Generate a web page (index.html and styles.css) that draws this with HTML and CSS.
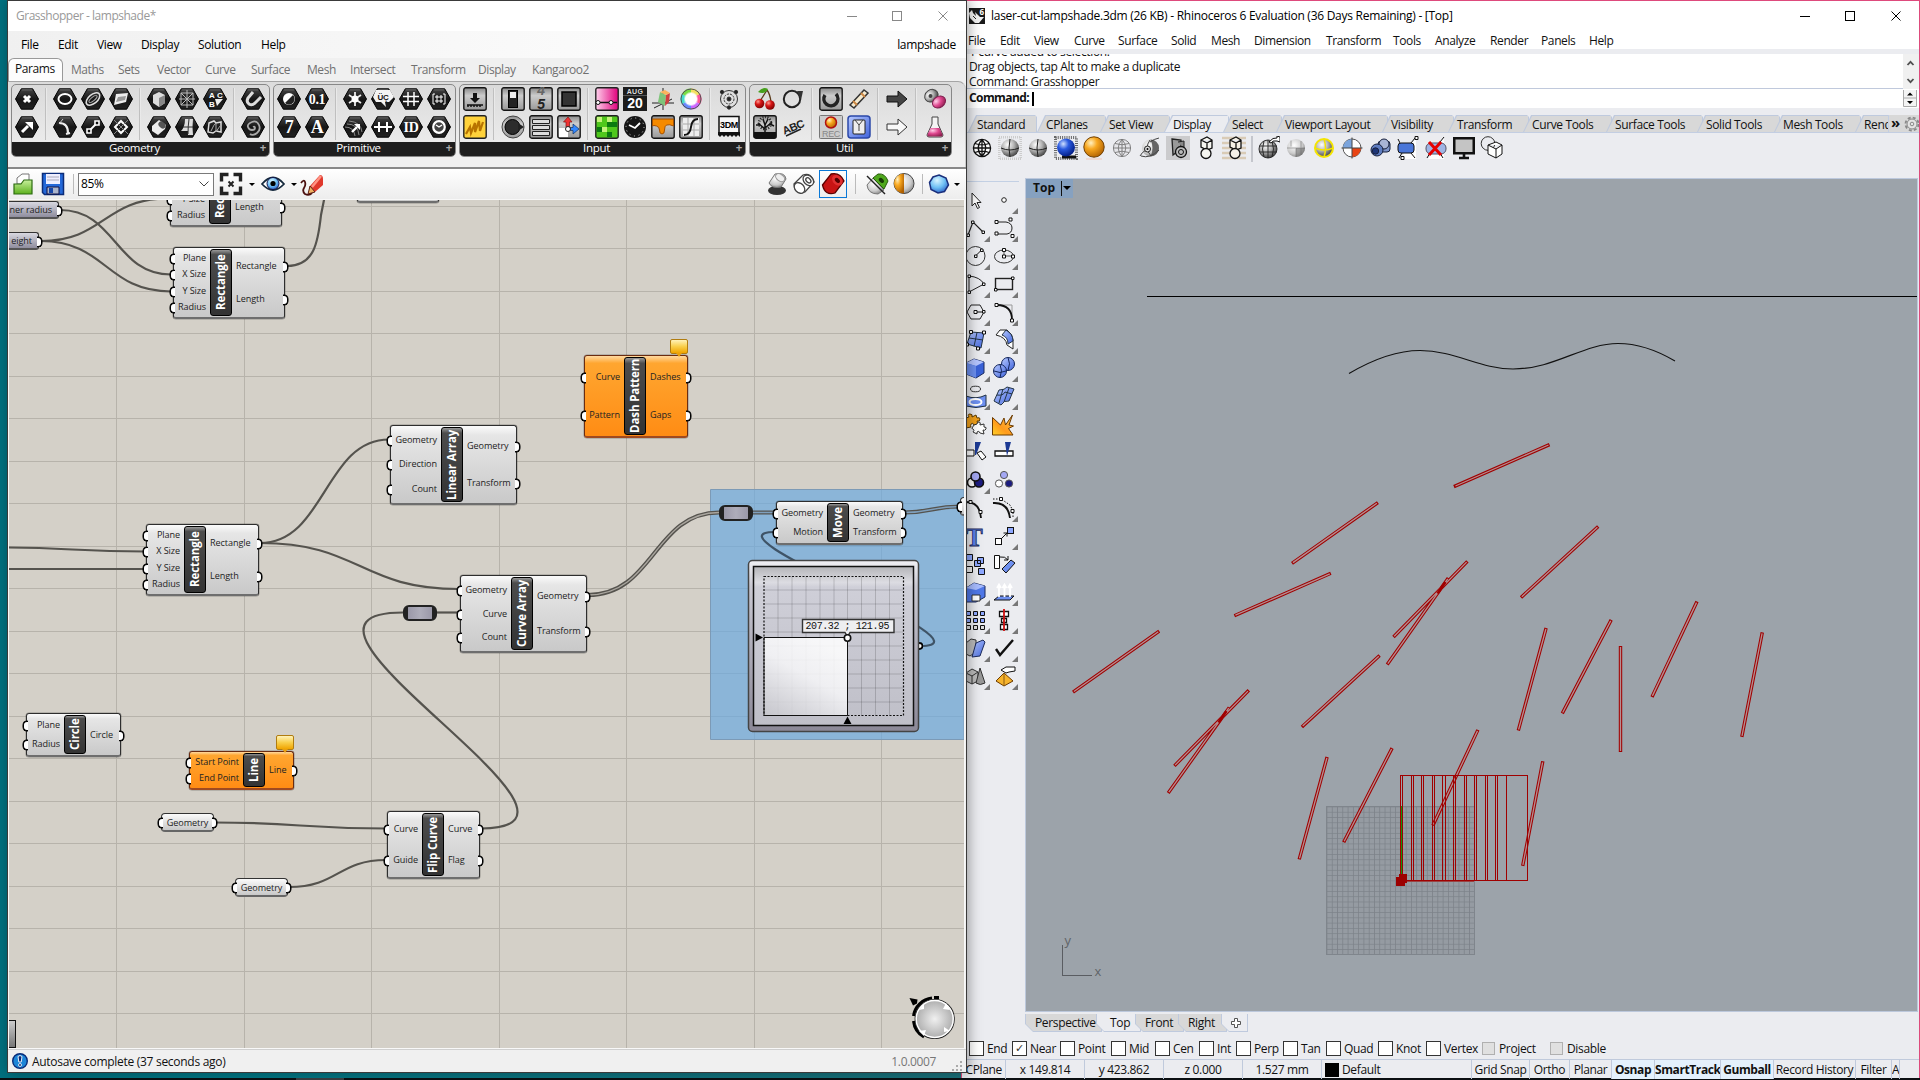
FILE: index.html
```html
<!DOCTYPE html>
<html lang="en">
<head>
<meta charset="utf-8">
<title>Grasshopper - lampshade</title>
<link rel="stylesheet" href="styles.css">
</head>
<body>
<svg class="defs" width="0" height="0">
  <defs>
    <linearGradient id="gHex" x1="0" y1="0" x2="0" y2="1"><stop offset="0" stop-color="#444"/><stop offset=".5" stop-color="#161616"/><stop offset="1" stop-color="#222"/></linearGradient>
    <linearGradient id="gSilver" x1="0" y1="0" x2="0" y2="1"><stop offset="0" stop-color="#8a8a8a"/><stop offset=".35" stop-color="#ccc"/><stop offset="1" stop-color="#999"/></linearGradient>
    <linearGradient id="gPink"><stop offset="0" stop-color="#ffd0ec"/><stop offset="1" stop-color="#e0007c"/></linearGradient>
    <linearGradient id="gBlueL" x1="0" y1="0" x2="1" y2="1"><stop offset="0" stop-color="#b9cbff"/><stop offset="1" stop-color="#3f63dc"/></linearGradient>
    <linearGradient id="gGreen" x1="0" y1="0" x2="0" y2="1"><stop offset="0" stop-color="#c8f09c"/><stop offset="1" stop-color="#5cb01c"/></linearGradient>
    <linearGradient id="gFire" x1="1" y1="0" x2="0" y2="1"><stop offset="0" stop-color="#ffc24a"/><stop offset=".6" stop-color="#ff9a1c"/><stop offset="1" stop-color="#ffd028"/></linearGradient>
    <radialGradient id="rGray" cx=".38" cy=".32" r=".75"><stop offset="0" stop-color="#fff"/><stop offset=".45" stop-color="#b5b5b5"/><stop offset="1" stop-color="#333"/></radialGradient>
    <radialGradient id="rLight" cx=".4" cy=".35" r=".75"><stop offset="0" stop-color="#fff"/><stop offset=".6" stop-color="#ccc"/><stop offset="1" stop-color="#777"/></radialGradient>
    <radialGradient id="rBlue" cx=".35" cy=".3" r=".75"><stop offset="0" stop-color="#cfe0ff"/><stop offset=".4" stop-color="#2a5ae0"/><stop offset="1" stop-color="#001a80"/></radialGradient>
    <radialGradient id="rOrange" cx=".35" cy=".3" r=".75"><stop offset="0" stop-color="#fff0c0"/><stop offset=".4" stop-color="#f8a820"/><stop offset="1" stop-color="#b06000"/></radialGradient>
    <radialGradient id="rRed" cx=".35" cy=".3" r=".75"><stop offset="0" stop-color="#ff9a90"/><stop offset=".4" stop-color="#d81818"/><stop offset="1" stop-color="#700"/></radialGradient>
    <radialGradient id="rPink" cx=".35" cy=".3" r=".75"><stop offset="0" stop-color="#ffd0e8"/><stop offset=".5" stop-color="#e04890"/><stop offset="1" stop-color="#902050"/></radialGradient>
    <radialGradient id="rSky" cx=".4" cy=".3" r=".8"><stop offset="0" stop-color="#d8f4ff"/><stop offset=".5" stop-color="#6fc0f4"/><stop offset="1" stop-color="#2050c0"/></radialGradient>
    <symbol id="hex" viewBox="0 0 24 24"><path d="M6.3 1.8h11.4l5.8 10.2-5.8 10.2H6.3L.5 12z" fill="url(#gHex)" stroke="#000"/><path d="M6.9 2.9h10.2" stroke="#666" fill="none"/></symbol>
    <symbol id="box" viewBox="0 0 24 24"><rect x=".8" y=".8" width="22.4" height="22.4" rx="2" fill="url(#gSilver)" stroke="#151515" stroke-width="1.4"/></symbol>
    <symbol id="globe" viewBox="0 0 24 24"><circle cx="12" cy="12" r="8.6"/><path d="M3.4 12h17.2M12 3.4v17.2M5 7.5q7 2.6 14 0M5 16.5q7-2.6 14 0M12 3.4q-7.5 8.6 0 17.2M12 3.4q7.5 8.6 0 17.2" fill="none"/></symbol>
    <symbol id="tri" viewBox="0 0 6 6"><path d="M6 0v6H0z" fill="#777"/></symbol>
  </defs>
</svg>

<div class="taskbar"><i></i></div>

<!-- ===================== Rhinoceros ===================== -->
<section class="rhino">
  <header class="r-title">
    <svg class="r-logo" width="16" height="16" viewBox="0 0 16 16"><rect width="16" height="16" fill="#1a1a1a"/><path d="M0 5l3-3 1 3 3 3-1-4 3 3 2 2h4l-5 6H6L1 10z" fill="#f2f2f2"/><path d="M4 8l3 3" stroke="#222"/><text x="10.4" y="6.6" font-size="8" font-weight="700" fill="#fff">6</text></svg>
    <span class="r-name">laser-cut-lampshade.3dm (26 KB) - Rhinoceros 6 Evaluation (36 Days Remaining) - [Top]</span>
    <svg class="r-ctl" width="102" height="12" viewBox="0 0 102 12" fill="none" stroke="#000"><path d="M0 6.5h10M91.500 1.500l9 9M100.500 1.500l-9 9"/><rect x="45.500" y="1.500" width="9" height="9"/></svg>
  </header>
  <nav class="r-menu"><span>File</span><span>Edit</span><span>View</span><span>Curve</span><span>Surface</span><span>Solid</span><span>Mesh</span><span>Dimension</span><span>Transform</span><span>Tools</span><span>Analyze</span><span>Render</span><span>Panels</span><span>Help</span></nav>
  <div class="r-history">
    <div class="r-lines"><p>1 curve added to selection.</p><p>Drag objects, tap Alt to make a duplicate</p><p>Command: Grasshopper</p></div>
    <svg class="r-scroll" width="16" height="35" viewBox="0 0 16 35" fill="none" stroke="#505050" stroke-width="1.800"><path d="M4.500 11l3-3.200 3 3.200M4.500 25l3 3.200 3-3.200"/></svg>
  </div>
  <div class="r-command"><b>Command:</b><i class="caret"></i>
    <svg class="r-spin" width="14" height="17" viewBox="0 0 14 17"><path d="M.500 0v16.500h13V0M0 8h14" fill="#f4f4f4" stroke="#aaa"/><path d="M4 5.500h6l-3-3zM4 11h6l-3 3z"/></svg>
  </div>
  <div class="r-tabs">
    <span>Standard</span><span>CPlanes</span><span>Set View</span><span class="on">Display</span><span>Select</span><span>Viewport Layout</span><span>Visibility</span><span>Transform</span><span>Curve Tools</span><span>Surface Tools</span><span>Solid Tools</span><span>Mesh Tools</span><span class="cut">Rend</span>
    <div class="r-more"><b>»</b><svg width="16" height="16" viewBox="0 0 16 16" fill="none" stroke="#888"><circle cx="8" cy="8" r="6.500" stroke-width="1.800" stroke-dasharray="3 2.100"/><circle cx="8" cy="8" r="5" fill="#e4e4e4"/><circle cx="8" cy="8" r="1.800"/></svg></div>
  </div>
  <div class="r-icons">
    <svg viewBox="0 0 24 24"><use href="#globe" fill="#fff" stroke="#111" stroke-width="1.300"/></svg>
    <svg viewBox="0 0 24 24"><rect x="1" y="1" width="22" height="22" fill="none" stroke="#ccc" stroke-width="3" stroke-dasharray="1 1"/><circle cx="12" cy="12" r="9" fill="url(#rGray)"/><path d="M3 12q9 4 18 0M12 3q-2 9 0 18" fill="none" stroke="#222"/></svg>
    <svg viewBox="0 0 24 24"><circle cx="12" cy="12" r="9" fill="url(#rGray)"/><path d="M3 12q9 4 18 0M12 3q-2 9 0 18" fill="none" stroke="#222"/></svg>
    <svg viewBox="0 0 24 24"><rect x="1.500" y="1.500" width="21" height="21" fill="none" stroke="#666" stroke-width="3" stroke-dasharray="1 1.200"/><path d="M8 21h14" stroke="#111" stroke-width="3"/><circle cx="12" cy="11.500" r="9" fill="url(#rBlue)"/></svg>
    <svg viewBox="0 0 24 24"><circle cx="12" cy="11" r="10.200" fill="url(#rOrange)" stroke="#713f00"/><path d="M4 23h16" stroke="#f2c9b8"/></svg>
    <svg viewBox="0 0 24 24"><use href="#globe" fill="#e6e6ea" stroke="#777" stroke-width=".9"/></svg>
    <svg viewBox="0 0 24 24"><circle cx="12.500" cy="12" r="8.500" fill="url(#rLight)"/><path d="M12.500 3.500a8.500 8.500 0 0 1 0 17q4-8 0-17z" fill="#666"/><path d="M2 20q2-4 6-6M12 6q4-3 9-4M12 4q-6 8 1 16M3 20q9 3 18-6" fill="none" stroke="#444"/><circle cx="9.500" cy="13" r="3" fill="#ddd" stroke="#222"/><circle cx="9.500" cy="13" r="1"/></svg>
    <svg viewBox="0 0 24 24"><path fill="#cbcbcd" d="M0 0h24v24H0z"/><path d="M6 3l9 1v9l-8 6z" fill="#999" stroke="#222" stroke-width="1.300"/><path d="M12 6l6-1v8" fill="#888" stroke="#222"/><circle cx="15" cy="16" r="5.500" fill="#bbb" stroke="#111" stroke-width="1.300"/><circle cx="15" cy="16" r="2.500" fill="none" stroke="#111"/></svg>
    <svg viewBox="0 0 24 24" fill="#f5f5f0" stroke="#111" stroke-width="1.300"><path d="M7 4l6-3 5 3v8l-5 2-6-3zM7 4l6 3 5-3M13 7v7"/><circle cx="12" cy="17.500" r="5"/></svg>
    <svg viewBox="0 0 24 24"><path d="M0 2h24M0 7h24M0 12h24M0 17h24M0 22h24" stroke="#d9cbb6" stroke-width="2.400"/><g fill="#f5f0e6" stroke="#111" stroke-width="1.300"><path d="M8 4l6-3 5 3v8l-5 2-6-3zM8 4l6 3 5-3M14 7v7"/><circle cx="13" cy="17.500" r="5"/></g></svg>
    <i class="r-sep"></i>
    <svg viewBox="0 0 24 24"><g stroke="#222" stroke-width=".9"><circle cx="12" cy="13" r="9" fill="url(#rGray)"/><path d="M3.500 10h17M3.500 16h17M12 4v18M8 5q-3 8 0 16M16 5q3 8 0 16" fill="none"/></g><path d="M13 6q4-5 8-4V0l3 1v5l-3-1q-4-1-6 2z" fill="#fff" stroke="#111"/></svg>
    <svg viewBox="0 0 24 24"><circle cx="12" cy="12" r="9" fill="url(#rLight)"/><path d="M12 12h9a9 9 0 0 1-9 9z" fill="#777" opacity=".6"/><path d="M12 12v9M3 12h18M7 4.500v6M17 5v14" stroke="#666" opacity=".5"/></svg>
    <svg viewBox="0 0 24 24"><circle cx="12" cy="12" r="9" fill="url(#rGray)" stroke="#f4e400" stroke-width="2"/><path d="M3 12q9 4 18 0M12 3q3 9 0 18" fill="none" stroke="#f4e400" stroke-width="1.500"/></svg>
    <svg viewBox="0 0 24 24"><circle cx="12" cy="12" r="9" fill="#fff" stroke="#555"/><path d="M12 12V3a9 9 0 0 0-9 9z" fill="#7ba4dc"/><path d="M12 12v9a9 9 0 0 0 9-9z" fill="#e84414"/><path d="M1.500 12h21M12 1.500v21" stroke="#444"/></svg>
    <svg viewBox="0 0 24 24" stroke="#17203c"><rect x="10" y="5" width="12" height="11" rx="3" fill="#7d93c8"/><circle cx="16" cy="8" r="5" fill="#a9b5d6"/><circle cx="9" cy="14" r="6" fill="#5e7cc0"/><circle cx="7.500" cy="15" r="3.200" fill="#1d3576"/></svg>
    <svg viewBox="0 0 24 24"><path d="M4 23L20 2v21z" fill="#fff"/><rect x="2" y="7" width="16" height="10" rx="3" fill="#4a76d8" stroke="#111"/><path d="M15 7l4-5M15 17l4 5M6 17l-3 5M4 7L2 3" stroke="#111"/><path d="M19 .500h3v3h-3zM5 20.500h3v3H5z" fill="#fff" stroke="#111"/></svg>
    <svg viewBox="0 0 24 24"><path d="M4 23L20 2v21z" fill="#fff"/><rect x="2" y="7" width="20" height="11" rx="5" fill="#9fb4e4" stroke="#556"/><path d="M16 6l4-5M16 17l3 5M6 17l-3 5" stroke="#111"/><path d="M5 6l12 13M17 6L5 19" stroke="#e60000" stroke-width="3"/></svg>
    <svg viewBox="0 0 24 24"><rect x="1" y="1" width="22" height="17.500" fill="#111"/><rect x="3.500" y="3.500" width="17" height="12.500" fill="#c4c4c4"/><path d="M7 22h10M12 18v4" stroke="#111" stroke-width="2.600"/></svg>
    <svg viewBox="0 0 24 24" fill="none" stroke="#333"><circle cx="8" cy="7.500" r="6.800"/><path d="M8 9l8-3 6 3v9l-6 4-8-4zM8 9l8 4 6-4M16 13v9" fill="#fff" stroke="#111"/></svg>
  </div>
  <div class="r-body">
    <div class="r-palette">
      <svg viewBox="0 0 28 28"><path d="M10 7v13l3-3 2.500 5.500 2-1-2.500-5h4z" fill="#fff" stroke="#222"/></svg>
      <svg viewBox="0 0 28 28"><circle cx="14" cy="14" r="2.300" fill="#fff" stroke="#222"/><use href="#tri" x="22" y="22" width="6" height="6"/></svg>
      <svg viewBox="0 0 28 28"><path d="M6 21l5-13 10 10" fill="none" stroke="#222" stroke-width="1.200"/><path d="M5 20h2.500v2.500H5zM9.500 7H12v2.500H9.500zM20 17h2.500v2.500H20z" fill="#fff" stroke="#111"/><use href="#tri" x="22" y="22" width="6" height="6"/></svg>
      <svg viewBox="0 0 28 28"><path d="M6 8h10q6 1 6 6t-5 6H6" fill="none" stroke="#222"/><path d="M5 6.500h3v3H5zM19 4h3v3h-3zM5 18h3v3H5zM21 20.500h3v3h-3z" fill="#fff" stroke="#111"/><use href="#tri" x="22" y="22" width="6" height="6"/></svg>
      <svg viewBox="0 0 28 28"><circle cx="13.500" cy="14" r="9.500" fill="none" stroke="#333"/><path d="M13.500 14l6-6" stroke="#111"/><path d="M12.500 13H15v2.500h-2.500zM18.500 7H21v2.500h-2.500z" fill="#fff" stroke="#111"/><use href="#tri" x="22" y="22" width="6" height="6"/></svg>
      <svg viewBox="0 0 28 28"><ellipse cx="14" cy="14.500" rx="9.500" ry="6.500" fill="none" stroke="#333"/><path d="M14 14V8M14 14h9" stroke="#555"/><path d="M12.500 13h3v3h-3zM12.500 6.500h3v3h-3zM21.500 13h3v3h-3z" fill="#fff" stroke="#111"/><use href="#tri" x="22" y="22" width="6" height="6"/></svg>
      <svg viewBox="0 0 28 28"><path d="M7 6v16l15-8M7 6q11 1 15 8" fill="none" stroke="#222"/><path d="M6 5h2.500v2.500H6zM6 21h2.500v2.500H6zM20.500 13H23v2.500h-2.500z" fill="#fff" stroke="#111"/><use href="#tri" x="22" y="22" width="6" height="6"/></svg>
      <svg viewBox="0 0 28 28"><rect x="5.500" y="8.500" width="17" height="11" fill="none" stroke="#222" stroke-width="1.400"/><path d="M4.500 18.500H7V21H4.500zM21.500 7H24v2.500h-2.500z" fill="#fff" stroke="#111"/><use href="#tri" x="22" y="22" width="6" height="6"/></svg>
      <svg viewBox="0 0 28 28"><path d="M9 7h9l4 7-4 7H9l-4-7z" fill="none" stroke="#222"/><path d="M13 14h8" stroke="#111"/><path d="M12 12.500h3v3h-3zM20.500 12.500h2.500v2.500h-2.500z" fill="#fff" stroke="#111"/><use href="#tri" x="22" y="22" width="6" height="6"/></svg>
      <svg viewBox="0 0 28 28"><path d="M7 7h15v14" fill="none" stroke="#999"/><path d="M7 7q15 0 15 15" fill="none" stroke="#111" stroke-width="1.800"/><path d="M5 5.500h3v3H5zM20.500 21h3v3h-3z" fill="#fff" stroke="#111"/><use href="#tri" x="22" y="22" width="6" height="6"/></svg>
      <svg viewBox="0 0 28 28"><path d="M9 6l13 1-3 15-14-4z" fill="url(#gBlueL)" stroke="#234"/><path d="M15 6.500l-3 14M7 12l14 2" stroke="#234"/><path d="M7.500 4.500h3v3h-3zM20.500 5h3v3h-3zM3.500 17h3v3h-3zM14.500 21h3v3h-3z" fill="#fff" stroke="#111"/><use href="#tri" x="22" y="22" width="6" height="6"/></svg>
      <svg viewBox="0 0 28 28"><path d="M6 9l4-5h7q6 4 6 10v9l-6-4q-1-8-11-10z" fill="#fff" stroke="#222"/><path d="M12 9l4-5q7 4 7 11l-5 3q0-7-6-9z" fill="url(#gBlueL)" stroke="#234"/><use href="#tri" x="22" y="22" width="6" height="6"/></svg>
      <svg viewBox="0 0 28 28"><path d="M4 9l8-4 10 3v11l-8 5-10-4z" fill="#3a62d8" stroke="#1c2b5c"/><path d="M4 9l8-4 10 3-8 4z" fill="#b5c6ff"/><path d="M4 9l10 3v12L4 20z" fill="#6d90f0"/><use href="#tri" x="22" y="22" width="6" height="6"/></svg>
      <svg viewBox="0 0 28 28" stroke="#14265c"><circle cx="18" cy="10" r="6.500" fill="url(#gBlueL)"/><circle cx="10" cy="17" r="6.500" fill="url(#gBlueL)"/><path d="M4 17q6 3 12 0M10 10.500q3 6 0 13M18 3.500q3 6 0 13" fill="none"/><use href="#tri" x="22" y="22" width="6" height="6" stroke="none"/></svg>
      <svg viewBox="0 0 28 28"><ellipse cx="13.500" cy="7" rx="5" ry="2.800" fill="none" stroke="#333"/><path d="M4 14q10 4 20-1v11q-10 3-20 0z" fill="#6e90f0" stroke="#234"/><ellipse cx="13.500" cy="20" rx="6" ry="3" fill="none" stroke="#fff" stroke-width="2"/><use href="#tri" x="22" y="22" width="6" height="6"/></svg>
      <svg viewBox="0 0 28 28"><path d="M4 19L9 8q6 0 8-3l7 2-5 12q-5-1-8 4z" fill="url(#gBlueL)" stroke="#234"/><path d="M7 13q6 1 8-3l7 2M13 7l-4 14M19 6l-5 14" fill="none" stroke="#234"/><use href="#tri" x="22" y="22" width="6" height="6"/></svg>
      <svg viewBox="0 0 28 28"><path d="M4 8l3-1q-2-3 1-3 3 0 2 3l4-2 1 3q3-1 3 1 0 3-3 2l1 4-4 0q-1-3-3-1-1 2 0 3l-5 1z" fill="#f3a21a" stroke="#5c3c00"/><path d="M12 15l3-1q0-2 2-2t1 3l4-1 0 3q3 0 2 2t-3 1l1 4-4-1q-1-3-3-1l0 2-4-2q2-2 0-3t-1-1z" fill="#fff" stroke="#333"/></svg>
      <svg viewBox="0 0 28 28"><path d="M2.500 25V7.500L10.500 15 14 8l1.500 7L22.500 5 19 15l4.500 1-5 2.500 4.500 6.500z" fill="url(#gFire)" stroke="#6b3a00"/></svg>
      <svg viewBox="0 0 28 28"><path d="M4 12h8v6H4zM15 15l4-2 5 6-4 3z" fill="#fff" stroke="#111"/><path d="M13 4h6l-5 13h-1z" fill="#1c3a94"/></svg>
      <svg viewBox="0 0 28 28"><path d="M5 13h18v5H5z" fill="#fff" stroke="#111" stroke-width="1.300"/><path d="M15 4h6l-4 14z" fill="#1c3a94"/></svg>
      <svg viewBox="0 0 28 28" stroke="#111" stroke-width="1.600"><circle cx="10" cy="16.500" r="4.500" fill="#fff"/><circle cx="17" cy="16.500" r="4.500" fill="#1c1c80"/><circle cx="13.500" cy="10.500" r="4.500" fill="#a4a8f4"/><use href="#tri" x="22" y="22" width="6" height="6" stroke="none"/></svg>
      <svg viewBox="0 0 28 28" stroke="#555"><circle cx="14" cy="9" r="3.600" fill="#a4a8f4"/><circle cx="9" cy="17.500" r="3.600" fill="#fff"/><circle cx="19" cy="17.500" r="3.600" fill="#1c1c80"/></svg>
      <svg viewBox="0 0 28 28"><path d="M4 8q14 0 15 16" fill="none" stroke="#111" stroke-width="1.800"/><path d="M7 6.500h3v3H7zM17 16.500h3v3h-3z" fill="#fff" stroke="#111"/></svg>
      <svg viewBox="0 0 28 28"><path d="M3 9q15-1 17 15" fill="none" stroke="#111" stroke-width="2"/><path d="M3 5h8l9 6 3 6v6" fill="none" stroke="#111" stroke-dasharray="1.500 1.500"/><path d="M9.500 3.500h3v3h-3zM21 15.500h3v3h-3z" fill="#fff" stroke="#111"/><use href="#tri" x="22" y="22" width="6" height="6"/></svg>
      <svg viewBox="0 0 28 28"><text x="4" y="24" class="icon-t">T</text></svg>
      <svg viewBox="0 0 28 28"><path d="M9 19l8-8M13.500 11H17v3.500" fill="none" stroke="#111"/><rect x="5.500" y="16.500" width="6" height="6" fill="#fff" stroke="#111"/><rect x="17.500" y="5.500" width="6" height="6" fill="#8ea8ff" stroke="#111"/><use href="#tri" x="22" y="22" width="6" height="6"/></svg>
      <svg viewBox="0 0 28 28" fill="#8ea8ff" stroke="#111"><path d="M4.500 4.500h6v6h-6zM15.500 7.500h6v6h-6zM12.500 10.500h6v6h-6zM16.500 18.500h6v6h-6z"/><path d="M4.500 16.500h6v6h-6z" fill="#eee"/></svg>
      <svg viewBox="0 0 28 28" stroke="#111"><path d="M4.500 5.500h5v13h-5z" fill="#fff"/><path d="M12 19l9-9 4 3-9 10z" fill="#6e90f0"/><path d="M10 7q5-1 8 3M18 6v4h-4" fill="none"/></svg>
      <svg viewBox="0 0 28 28"><path d="M4 10l8-5 11 3v11l-9 5H4z" fill="#5078e8" stroke="#1c2b5c"/><path d="M4 10l8-5 11 3-9 4z" fill="#a8bcff"/><path d="M10 17h8v6h-8z" fill="#fff" stroke="#333"/><use href="#tri" x="22" y="22" width="6" height="6"/></svg>
      <svg viewBox="0 0 28 28"><path d="M4 22l5-4h15l-4 4z" fill="#6e90f0" stroke="#111"/><path d="M9 19V7M14.500 19V7M20 19V7M7 10l2-3.500 2 3.500M12.500 10l2-3.500 2 3.500M18 10l2-3.500 2 3.500" fill="none" stroke="#fff" stroke-width="1.800"/><use href="#tri" x="22" y="22" width="6" height="6"/></svg>
      <svg viewBox="0 0 28 28" fill="#8ea8ff" stroke="#111"><path d="M4.500 5.500h4v4h-4zM11.500 5.500h4v4h-4zM18.500 5.500h4v4h-4zM4.500 12.500h4v4h-4zM11.500 12.500h4v4h-4zM18.500 12.500h4v4h-4z"/><path d="M4.500 19.500h4v4h-4zM11.500 19.500h4v4h-4zM18.500 19.500h4v4h-4z" fill="#ddd"/><use href="#tri" x="22" y="22" width="6" height="6" stroke="none"/></svg>
      <svg viewBox="0 0 28 28" fill="#fff" stroke="#111" stroke-width="1.300"><path d="M9.500 5.500h9v5h-9zM11.500 12.500h5v4h-5zM10.500 18.500h7v5h-7z"/><path d="M14 3v22" stroke="#d01010" stroke-width="1.800"/><use href="#tri" x="22" y="22" width="6" height="6" stroke="none"/></svg>
      <svg viewBox="0 0 28 28" stroke="#333"><path d="M4 9l5-4 5 1v12l-6 4-4-2z" fill="#bbb"/><path d="M14 9l7-3 2 2-5 14-8 1z" fill="url(#gBlueL)" stroke="#1c2b5c"/><use href="#tri" x="22" y="22" width="6" height="6" stroke="none"/></svg>
      <svg viewBox="0 0 28 28"><path d="M6 15l4 6 13-15" fill="none" stroke="#111" stroke-width="2.400"/><use href="#tri" x="22" y="22" width="6" height="6"/></svg>
      <svg viewBox="0 0 28 28" stroke="#333"><path d="M4 11l6-4 6 3v9l-6 3-6-3z" fill="#bbb"/><path d="M4 11l6 3 6-4M10 14v8" fill="none"/><path d="M18 6l5 15q-5 3-9 0z" fill="#999"/><use href="#tri" x="22" y="22" width="6" height="6" stroke="none"/></svg>
      <svg viewBox="0 0 28 28"><path d="M14 11l9 8-9 5-8-5z" fill="#f6b32c" stroke="#6b3a00"/><path d="M14 11v13" stroke="#8b5a10"/><path d="M11 8l5-3h9v4l-6 1-3 1z" fill="#fff" stroke="#111"/><use href="#tri" x="22" y="22" width="6" height="6"/></svg>
    </div>
    <div class="viewport">
      <svg class="scene" width="891" height="832" viewBox="1026 179 891 832">
        <path d="M1147 296.500h770" stroke="#000" fill="none" shape-rendering="crispEdges"/>
        <path d="M1349 373.500C1372 360 1395 350.500 1420 350.500C1455 350.500 1480 369 1513 369C1555 369 1583 343.500 1618 343.500C1640 343.500 1658 351 1675 361" stroke="#111" stroke-width="1.100" fill="none"/>
        <defs><pattern id="cgrid" x="1326.500" y="806.500" width="5.280" height="5.280" patternUnits="userSpaceOnUse"><path d="M0 0H5.300M0 0V5.300" stroke="#7c8289" stroke-width="1.500"/></pattern></defs>
        <rect x="1326.500" y="806.500" width="148" height="148" fill="#959ba2"/>
        <rect x="1326.500" y="806.500" width="148" height="148" fill="url(#cgrid)" stroke="#7f858c"/>
        <path fill="none" stroke="#a00000" stroke-width="3.400" d="M1453.900 486.600L1549.500 444.600M1292 563.300L1377.900 502.600M1234.400 615.700L1330.800 573.300M1521 597.500L1598.200 526.400M1393.500 637L1467.400 561.400M1387.200 664.400L1448.300 578M1546.100 628L1518.300 730.500M1611.200 619.900L1562.300 713.400M1620.500 646V752M1697 601.600L1652 696.900M1762.300 632.400L1741.800 736.900M1159.200 631.100L1073 692.100M1301.900 726.900L1379.600 655.600M1248.800 690.300L1174.400 765.900M1229.300 707.400L1168.200 793M1327.100 757L1299.200 859.400M1392.100 748.100L1343.700 842.300M1477.900 729.900L1432.900 825.500M1542.800 761.300L1522.700 865.900"/>
        <path fill="none" stroke="#b38f92" stroke-width="1.300" d="M1455.400 486L1548.500 445M1292.900 562.600L1376.900 503.200M1235.400 615.200L1329.800 573.800M1521.800 596.700L1597.400 527.200M1394.200 636.200L1466.600 562.100M1387.800 663.600L1447.700 578.800M1545.900 629L1518.600 729.500M1610.700 620.900L1562.700 712.500M1620.500 647V751M1696.500 602.600L1652.400 695.900M1762.100 633.400L1742 735.900M1158.300 631.700L1073.900 691.500M1302.700 726.100L1378.800 656.300M1248 691.100L1175.100 765.100M1228.700 708.200L1168.800 792.100M1326.900 758L1299.500 858.400M1391.600 749L1344.200 841.300M1477.500 730.900L1433.300 824.500M1542.600 762.300L1522.900 864.900"/>
        <path d="M1437.500 593.500L1445.500 582M1218.500 722.500L1226.500 711" stroke="#a00000" stroke-width="2.600"/>
        <g fill="none" stroke="#a00000" shape-rendering="crispEdges"><path d="M1400.500 775.500h127v105h-127zM1402.500 775v105M1411.500 775v105M1413.500 775v105M1421.500 775v105M1423.500 775v105M1432.500 775v105M1434.500 775v105M1442.500 775v105M1445.500 775v105M1453.500 775v105M1455.500 775v105M1464.500 775v105M1466.500 775v105M1474.500 775v105M1476.500 775v105M1485.500 775v105M1487.500 775v105M1495.500 775v105M1497.500 775v105M1506.500 775v105"/></g>
        <path d="M1401.500 806v68" stroke="#0c960c" shape-rendering="crispEdges"/><path d="M1405 881.500h69" stroke="#9a4444"/>
        <path d="M1396 877h3v-3h8v9h-2v3h-9z" fill="#9c0000"/>
        <path d="M1062.500 945v30.500H1092" fill="none" stroke="#5a5d62" shape-rendering="crispEdges"/>
        <text class="axis" x="1064.500" y="945">y</text><text class="axis" x="1094.500" y="975.500">x</text>
      </svg>
      <div class="vp-label"><b>Top</b><i></i></div>
    </div>
    <div class="vp-tabs"><span>Perspective</span><span class="on">Top</span><span>Front</span><span>Right</span><span class="on plus"><svg width="10" height="10" viewBox="0 0 10 10"><path d="M3.500.500h3v3h3v3h-3v3h-3v-3h-3v-3h3z" fill="#fff" stroke="#555"/></svg></span></div>
  </div>
  <div class="osnap">
    <label>End</label><label class="chk">Near</label><label>Point</label><label>Mid</label><label>Cen</label><label>Int</label><label>Perp</label><label>Tan</label><label>Quad</label><label>Knot</label><label>Vertex</label><label class="off">Project</label><label class="off">Disable</label>
  </div>
  <footer class="r-status"><span class="first">CPlane</span><span>x 149.814</span><span>y 423.862</span><span>z 0.000</span><span>1.527 mm</span><span class="layer"><i></i>Default</span><span>Grid Snap</span><span>Ortho</span><span>Planar</span><b>Osnap</b><b>SmartTrack</b><b>Gumball</b><span>Record History</span><span>Filter</span><span>A</span></footer>
</section>

<!-- ===================== Grasshopper ===================== -->
<section class="gh">
  <header class="g-title"><span>Grasshopper - lampshade*</span>
    <svg width="102" height="12" viewBox="0 0 102 12" fill="none" stroke="#888"><path d="M0 6.500h10M91.500 1.500l9 9M100.500 1.500l-9 9"/><rect x="45.500" y="1.500" width="9" height="9"/></svg>
  </header>
  <nav class="g-menu"><span>File</span><span>Edit</span><span>View</span><span>Display</span><span>Solution</span><span>Help</span><span class="doc">lampshade</span></nav>
  <nav class="g-tabs"><span class="on">Params</span><span>Maths</span><span>Sets</span><span>Vector</span><span>Curve</span><span>Surface</span><span>Mesh</span><span>Intersect</span><span>Transform</span><span>Display</span><span>Kangaroo2</span></nav>
  <div class="ribbon">
    <div class="panel p-geo">
      <div class="groups">
        <div class="group c1">
          <svg viewBox="0 0 24 24"><use href="#hex"/><path d="M9 9l6 6M15 9l-6 6" stroke="#fff" stroke-width="3"/></svg>
          <svg viewBox="0 0 24 24"><use href="#hex"/><path d="M7 17l6-6" stroke="#fff" stroke-width="3"/><path d="M10 7h8v8z" fill="#fff"/></svg>
        </div>
        <div class="group c3">
          <svg viewBox="0 0 24 24"><use href="#hex"/><ellipse cx="12" cy="12" rx="6.500" ry="5" fill="none" stroke="#fff" stroke-width="2"/></svg>
          <svg viewBox="0 0 24 24"><use href="#hex"/><ellipse cx="12" cy="12" rx="8" ry="4.500" fill="none" stroke="#ddd" stroke-width="1.600" transform="rotate(-40 12 12)"/><ellipse cx="12" cy="12" rx="5" ry="1.800" fill="none" stroke="#aaa" transform="rotate(-40 12 12)"/></svg>
          <svg viewBox="0 0 24 24"><use href="#hex"/><path d="M7 7l12-1-2 9-12 3z" fill="#eee"/><path d="M9 10l8-1-1 4-9 2z" fill="#999"/></svg>
          <svg viewBox="0 0 24 24"><use href="#hex"/><path d="M6 8q9 0 9 10M13 19l4-1" fill="none" stroke="#eee" stroke-width="2.200"/><path d="M10 4l-4 5" stroke="#ccc"/></svg>
          <svg viewBox="0 0 24 24"><use href="#hex"/><path d="M8 16l8-8" stroke="#fff" stroke-width="1.800"/><path d="M6 14h4v4H6zM14 6h4v4h-4z" fill="#111" stroke="#fff" stroke-width="1.600"/></svg>
          <svg viewBox="0 0 24 24"><use href="#hex"/><path d="M12 6l6 6-6 6-6-6z" fill="none" stroke="#fff" stroke-width="2"/><path d="M5 5l14 14M19 5L5 19" stroke="#888"/></svg>
        </div>
        <div class="group c3">
          <svg viewBox="0 0 24 24"><use href="#hex"/><path d="M6 8l6-3 6 3v8l-6 4-6-4z" fill="#ddd"/><path d="M12 11l6-3v8l-6 4z" fill="#888"/></svg>
          <svg viewBox="0 0 24 24"><use href="#hex"/><path d="M6 6h12v12H6zM12 3v18M4 12h16M6 6l12 12M18 6L6 18" fill="none" stroke="#bbb"/></svg>
          <svg viewBox="0 0 24 24"><use href="#hex"/><text x="6" y="10.500" class="tiny">A</text><text x="14" y="10.500" class="tiny">C</text><text x="6" y="20" class="tiny">B</text><path d="M12 12h8l-6 7z" fill="#eee"/></svg>
          <svg viewBox="0 0 24 24"><use href="#hex"/><path d="M5 11l7-6 7 5-1 4-7 6-6-4z" fill="#eee"/><ellipse cx="15" cy="10" rx="3" ry="4" fill="#555" transform="rotate(-45 15 10)"/></svg>
          <svg viewBox="0 0 24 24"><use href="#hex"/><path d="M10 4h8q-1 8 0 16h-5v-4H6q4-4 4-12z" fill="#ddd"/><path d="M14 4q-1 7-1 15M8 12h10" fill="none" stroke="#333"/></svg>
          <svg viewBox="0 0 24 24"><use href="#hex"/><path d="M6 8l5-2 2 2 5-1v10l-5-1-3 2-5-1z" fill="none" stroke="#ddd" stroke-width="1.500"/><path d="M8 16q3-7 5-8v9q3-5 5-7" fill="none" stroke="#aaa"/></svg>
        </div>
        <div class="group c1">
          <svg viewBox="0 0 24 24"><use href="#hex"/><path d="M12 5l-5 6q-2 4 1 6t6-1l6-6" fill="none" stroke="#ddd" stroke-width="3"/></svg>
          <svg viewBox="0 0 24 24"><use href="#hex"/><path d="M12 12q2-1 2 1t-3 2-4-3 4-5 7 3-2 8-7 1" fill="none" stroke="#aaa" stroke-width="1.800"/></svg>
        </div>
      </div>
      <h4>Geometry<i>+</i></h4>
    </div>
    <div class="panel p-pri">
      <div class="groups">
        <div class="group c2">
          <svg viewBox="0 0 24 24"><use href="#hex"/><circle cx="12" cy="12" r="6" fill="#fff"/><path d="M16 8a5.600 5.600 0 0 1-8 8z" fill="#222"/></svg>
          <svg viewBox="0 0 24 24"><use href="#hex"/><text x="12" y="17" class="serif mid">0.1</text></svg>
          <svg viewBox="0 0 24 24"><use href="#hex"/><text x="12" y="18" class="serif big">7</text></svg>
          <svg viewBox="0 0 24 24"><use href="#hex"/><text x="12" y="18" class="serif big">A</text></svg>
        </div>
        <div class="group c4">
          <svg viewBox="0 0 24 24"><use href="#hex"/><path d="M12 5v14M6 8l12 8M18 8L6 16" stroke="#eee" stroke-width="1.800"/><circle cx="12" cy="12" r="3.500" fill="#fff"/></svg>
          <svg viewBox="0 0 24 24"><use href="#hex"/><path d="M5 3h14l4 7-5 5h-4l1 5-5-5H5l-3-5z" fill="#f4f4f4"/><text x="12" y="13" class="tiny dark">ÜÇ</text></svg>
          <svg viewBox="0 0 24 24"><use href="#hex"/><path d="M9 5v14M15 5v14M4 9.500h16M4 14.500h16" stroke="#fff" stroke-width="1.500"/></svg>
          <svg viewBox="0 0 24 24"><use href="#hex"/><path d="M8 7H6v10h2M16 7h2v10h-2M9 9h2v2H9zM13 9h2v2h-2zM9 13h2v2H9zM13 13h2v2h-2z" fill="none" stroke="#fff"/></svg>
          <svg viewBox="0 0 24 24"><use href="#hex"/><path d="M2 12q9 0 10 9M4 9q11 0 12 11M6 6q12 1 13 11" fill="none" stroke="#888"/><path d="M9 17l5-5" stroke="#fff" stroke-width="2.400"/><path d="M11 9h6v6z" fill="#fff"/></svg>
          <svg viewBox="0 0 24 24"><use href="#hex"/><path d="M3 12h18M8 7v10M16 7v10" stroke="#fff" stroke-width="2"/></svg>
          <svg viewBox="0 0 24 24"><use href="#hex"/><text x="12" y="17" class="serif mid">ID</text></svg>
          <svg viewBox="0 0 24 24"><use href="#hex"/><circle cx="12" cy="12" r="5.800" fill="#444" stroke="#fff" stroke-width="2.200"/><path d="M9 10l3 2 3-2" fill="none" stroke="#fff" stroke-width="1.400"/></svg>
        </div>
      </div>
      <h4>Primitive<i>+</i></h4>
    </div>
    <div class="panel p-inp">
      <div class="groups">
        <div class="group c1">
          <svg viewBox="0 0 24 24"><use href="#box"/><path d="M10 6h4v5h3l-5 5-5-5h3z" fill="#111"/><path d="M4 18h16M5 20v-2M8 20v-2M11 20v-2M14 20v-2M17 20v-2" stroke="#111" stroke-width="1.500"/></svg>
          <svg viewBox="0 0 24 24"><rect x=".800" y=".800" width="22.400" height="22.400" rx="2" fill="#ffd23a" stroke="#222" stroke-width="1.400"/><path d="M3 19l4-7 1 6 4-10 0 9 4-11 1 10 3-9" fill="none" stroke="#b87400" stroke-width="2.200"/></svg>
        </div>
        <div class="group c3">
          <svg viewBox="0 0 24 24"><use href="#box"/><rect x="7.500" y="3.500" width="9" height="17" fill="#222" stroke="#000"/><rect x="9" y="5" width="6" height="6" fill="#eee"/></svg>
          <svg viewBox="0 0 24 24"><use href="#box"/><text x="12" y="8" class="digit dim">4</text><text x="12" y="22" class="digit">5</text></svg>
          <svg viewBox="0 0 24 24"><use href="#box"/><rect x="5" y="5" width="14" height="14" fill="#333" stroke="#000" stroke-width="1.500"/></svg>
          <svg viewBox="0 0 24 24"><circle cx="12" cy="12" r="11" fill="url(#gSilver)" stroke="#444"/><circle cx="11.500" cy="12" r="7.500" fill="#2c2c2c" stroke="#000"/><path d="M17 8l6 4-6 4z" fill="#222"/></svg>
          <svg viewBox="0 0 24 24"><use href="#box"/><path d="M3.500 4.500h17v4h-17zM3.500 10.500h17v4h-17zM3.500 16.500h17v4h-17z" fill="#ddd" stroke="#222"/></svg>
          <svg viewBox="0 0 24 24"><use href="#box"/><path d="M2 13h9v9H2z" fill="#fff"/><path d="M9 12V7H6.500L11 2l4 5h-2.500v5z" fill="#e33" stroke="#811" stroke-width=".7"/><path d="M12 12.500h4V9l6 5-6 5v-3.500h-4z" fill="#38f" stroke="#136" stroke-width=".7"/><circle cx="11" cy="14" r="2.500" fill="#fff" stroke="#222"/></svg>
        </div>
        <div class="group c4">
          <svg viewBox="0 0 24 24"><rect x=".800" y=".800" width="22.400" height="22.400" rx="2" fill="url(#gPink)" stroke="#222" stroke-width="1.400"/><path d="M2 15.500h20" stroke="#111" stroke-width="1.500"/><circle cx="3" cy="15.500" r="2" fill="#fff" stroke="#111"/><circle cx="16" cy="15.500" r="2" fill="#fff" stroke="#111"/></svg>
          <svg viewBox="0 0 24 24"><path d="M0 0h24v24H0z" fill="#1c1c1c"/><path d="M0 8.500h24" stroke="#555"/><text x="12" y="7.300" class="aug">AUG</text><text x="12" y="21" class="d20">20</text></svg>
          <svg viewBox="0 0 24 24"><path d="M1 16h22M12 1v22M3 21L21 12" stroke="#222"/><path d="M9 5l6 3-1 11-7-4z" fill="#7fc47a"/><path d="M15 8l4-2-1 9-4 4z" fill="#d04040"/><path d="M9 5l5-2 5 3-4 2z" fill="#fbb45c"/></svg>
          <svg viewBox="0 0 24 24" fill="none" stroke-width="5"><path d="M12 4a8 8 0 0 1 7 4" stroke="#f4e060"/><path d="M19 8a8 8 0 0 1 0 8" stroke="#f59"/><path d="M19 16a8 8 0 0 1-7 4" stroke="#c6f"/><path d="M12 20a8 8 0 0 1-7-4" stroke="#68f"/><path d="M5 16a8 8 0 0 1 0-8" stroke="#4dc"/><path d="M5 8a8 8 0 0 1 7-4" stroke="#7d4"/><circle cx="12" cy="12" r="10" stroke="#555" stroke-width="1"/><circle cx="12" cy="12" r="6" fill="#fff" stroke="#fff8" stroke-width="2"/></svg>
          <svg viewBox="0 0 24 24"><rect x=".8" y=".8" width="22.400" height="22.400" rx="2" fill="#4fc81c" stroke="#222" stroke-width="1.400"/><path d="M2 2h5v5H2zM12 2h5v5h-5zM7 12h5v5H7z" fill="#c4f47c"/><path d="M17 7h5v5h-5zM2 12h5v5H2zM12 17h5v5h-5zM12 7h5v5h-5z" fill="#0b7a10"/></svg>
          <svg viewBox="0 0 24 24"><circle cx="12" cy="12" r="11" fill="#151515"/><circle cx="12" cy="12" r="9" fill="none" stroke="#ddd" stroke-dasharray="1 3.710"/><path d="M6 10l6 3 5-5" fill="none" stroke="#fff" stroke-width="1.800"/></svg>
          <svg viewBox="0 0 24 24"><use href="#box"/><path d="M1.500 4h21v7q-4-2-7-1-2 1-2 5t-2.500 4-2.500-4q0-3-3-4t-4 0z" fill="#f58a00" stroke="#a65000"/></svg>
          <svg viewBox="0 0 24 24"><use href="#box"/><rect x="4" y="3" width="16" height="18" fill="#eee"/><path d="M4 9h16M4 15h16M9 3v18M15 3v18" stroke="#aaa"/><path d="M5 20q6 0 7-8t7-8" fill="none" stroke="#111" stroke-width="2"/></svg>
        </div>
        <div class="group c1">
          <svg viewBox="0 0 24 24" fill="none" stroke="#333"><circle cx="12" cy="12" r="8.500"/><circle cx="12" cy="12" r="5" stroke-dasharray="2 1"/><circle cx="12" cy="12" r="2" fill="#222"/><g fill="#222"><circle cx="5" cy="5" r="1.700"/><circle cx="19" cy="5" r="1.700"/><circle cx="12" cy="20.500" r="1.700"/></g></svg>
          <svg viewBox="0 0 24 24"><path d="M2 1.500h20V18H2z" fill="#f8f8f8" stroke="#111" stroke-width="1.500"/><path d="M1 17h22v5l-2-2-2 2-2-2-2 2-2-2-2 2-2-2-2 2-2-2-2 2-2-2z" fill="#111"/><text x="12" y="12.500" class="tdm">3DM</text></svg>
        </div>
      </div>
      <h4>Input<i>+</i></h4>
    </div>
    <div class="panel p-utl">
      <div class="groups">
        <div class="group c2">
          <svg viewBox="0 0 24 24"><path d="M7 14q4-6 7-11M18 15q-1-8-4-12" fill="none" stroke="#5a3a1a" stroke-width="1.300"/><path d="M5 5q5-6 10-3-3 6-10 3z" fill="#46a01c"/><circle cx="6.500" cy="16.500" r="4.800" fill="url(#rRed)"/><circle cx="17" cy="18" r="4.800" fill="url(#rRed)"/></svg>
          <svg viewBox="0 0 24 24"><circle cx="11" cy="12" r="8.200" fill="none" stroke="#222" stroke-width="2"/><path d="M16 4h6l-2 9z" fill="#333"/></svg>
          <svg viewBox="0 0 24 24"><use href="#box"/><path d="M1 17h22v6H1z" fill="#111"/><path d="M12 18v-8M12 14L5 8M12 13l7-6M12 10l-2-6M12 10l3-6M7 10H3M17 9l4 2" stroke="#111" stroke-width="1.500"/><circle cx="12" cy="8" r="6" fill="none" stroke="#222" stroke-width="2.500" stroke-dasharray="1 1.500"/></svg>
          <svg viewBox="0 0 24 24"><text x="1" y="16" class="abc" transform="rotate(-22 12 12)">ABC</text><path d="M5 21l15-7" stroke="#222" stroke-width="1.400"/></svg>
        </div>
        <div class="group c2">
          <svg viewBox="0 0 24 24"><use href="#box"/><path d="M6 8a7 7 0 1 0 11-1" fill="none" stroke="#222" stroke-width="3.500"/></svg>
          <svg viewBox="0 0 24 24"><path d="M3 18L17 3l4 3L7 21z" fill="#f4ead0" stroke="#333" stroke-width="1.500"/><path d="M6 14l4 4M14 6l4 4" stroke="#c84" stroke-width="2"/></svg>
          <svg viewBox="0 0 24 24"><rect x=".500" y=".500" width="23" height="23" rx="1" fill="#ccc" stroke="#777"/><circle cx="12" cy="7.500" r="5.500" fill="url(#rOrange)" stroke="#b01010" stroke-width="1.500"/><text x="12" y="22" class="rec">REC</text></svg>
          <svg viewBox="0 0 24 24"><rect x="1" y="1" width="22" height="22" rx="3" fill="url(#gBlueL)" stroke="#2b48a8" stroke-width="1.500"/><rect x="6" y="5" width="12" height="14" rx="1" fill="#eee" stroke="#222"/><path d="M8 5l4 5 4-5M12 10v6" fill="none" stroke="#444"/></svg>
        </div>
        <div class="group c1">
          <svg viewBox="0 0 24 24"><path d="M2 9h11V4l9 8-9 8v-5H2z" fill="#444" stroke="#111"/></svg>
          <svg viewBox="0 0 24 24"><path d="M2 9h11V4l9 8-9 8v-5H2z" fill="#f8f8f8" stroke="#333"/></svg>
        </div>
        <div class="group c1">
          <svg viewBox="0 0 24 24"><ellipse cx="8.500" cy="9" rx="7" ry="6" transform="rotate(-35 8 9)" fill="url(#rGray)" stroke="#444"/><circle cx="7.500" cy="9" r="2" fill="#444"/><ellipse cx="16" cy="15" rx="7" ry="5.500" transform="rotate(-35 16 15)" fill="url(#rPink)" stroke="#802050"/></svg>
          <svg viewBox="0 0 24 24"><path d="M9 2h6v7l5 11q0 2-2 2H6q-2 0-2-2L9 9z" fill="#f4f4f4" stroke="#444"/><path d="M7.500 13h9l3.200 7q0 1.500-2 1.500H6.300q-2 0-2-1.500z" fill="url(#rPink)"/></svg>
        </div>
      </div>
      <h4>Util<i>+</i></h4>
    </div>
  </div>
  <div class="g-toolbar">
    <svg class="t-open" viewBox="0 0 24 24"><path d="M6 12V6l5-4h7v10z" fill="#fff" stroke="#777"/><path d="M3 22V12h7l3-4h8v14z" fill="url(#gGreen)" stroke="#2b6b10" stroke-width="1.200"/></svg>
    <svg class="t-save" viewBox="0 0 24 24"><path d="M1.500 1.500h21v21h-19l-2-2z" fill="#2468d8" stroke="#0c2c78" stroke-width="1.500"/><path d="M5 2h14v10H5z" fill="#eef"/><path d="M6 5h12M6 8h12" stroke="#aab"/><path d="M6 15h12v7H6z" fill="#aab4cc" stroke="#114"/><path d="M8 16h4v5H8z" fill="#1646a8"/></svg>
    <i class="t-sep"></i>
    <div class="combo">85%<svg width="10" height="6" viewBox="0 0 10 6"><path d="M.500.500L5 5 9.500.500" fill="none" stroke="#444"/></svg></div>
    <svg viewBox="0 0 24 24"><path d="M2.500 9.500v-7h7M14.500 2.500h7v7M21.500 14.500v7h-7M9.500 21.500h-7v-7" fill="none" stroke="#222" stroke-width="3.400"/><path d="M9.500 9.500l5 5M14.500 9.500l-5 5" stroke="#222" stroke-width="2"/></svg>
    <i class="drop"></i>
    <svg viewBox="0 0 24 24"><path d="M1 12Q12-1 23 12 12 24 1 12z" fill="#fff" stroke="#15293c" stroke-width="1.800"/><circle cx="12" cy="11.500" r="6" fill="url(#rSky)" stroke="#114"/><circle cx="12" cy="11.500" r="2.600" fill="#000"/></svg>
    <i class="drop"></i>
    <svg class="t-pen" viewBox="0 0 24 24"><path d="M1 11q3-4 4-1t-1 6 1 6q4 2 7-1" fill="none" stroke="#4a1010" stroke-width="1.800"/><path d="M10 14L20 3q3 0 3 4v6l-8 7z" fill="#e0382c"/><path d="M12 15l9-11" stroke="#ff9484" stroke-width="2.500"/><path d="M10 14l-2 8 7-2z" fill="#f0b060" stroke="#5a1a10"/></svg>
    <div class="t-right">
      <svg viewBox="0 0 24 24"><ellipse cx="12" cy="18.500" rx="9" ry="4.500" fill="#333"/><path d="M4 11l6-9q10-2 11 5l-5 8q-9 2-12-4z" fill="url(#rLight)" stroke="#777"/><ellipse cx="15.500" cy="5.500" rx="5" ry="3.300" transform="rotate(35 15 5)" fill="#eee" stroke="#999"/></svg>
      <svg viewBox="0 0 24 24" fill="#fff" stroke="#444" stroke-width="1.300"><path d="M2 12L11 3q8-3 11 7l-9 10q-10 3-11-8z"/><ellipse cx="16.500" cy="8" rx="6" ry="4.500" transform="rotate(45 16 8)"/><ellipse cx="7.500" cy="16" rx="6" ry="4.500" transform="rotate(45 7.500 16)"/><ellipse cx="16.500" cy="8" rx="3" ry="2" transform="rotate(45 16 8)"/></svg>
      <div class="t-sel"><svg viewBox="0 0 24 24"><path d="M1.500 13L10 2q9-2 13 7l-9 12q-10 3-12.500-8z" fill="#c81414" stroke="#5a0000" stroke-width="1.300"/><ellipse cx="16.500" cy="8" rx="6" ry="4.500" transform="rotate(45 16 8)" fill="#e03030"/><ellipse cx="16.500" cy="8" rx="3" ry="2" transform="rotate(45 16 8)" fill="#500"/></svg></div>
      <i class="t-sep s1"></i>
      <svg viewBox="0 0 24 24"><path d="M2 13l6-7 11 12-6 4q-10 0-11-9z" fill="url(#rLight)" stroke="#777"/><path d="M8 6l5-4q7-1 10 7l-4 8z" fill="#4fa81c" stroke="#255c08"/><ellipse cx="16.500" cy="8" rx="3" ry="2" transform="rotate(45 16 8)" fill="#173c04"/><path d="M2 4l18 18" stroke="#222" stroke-width="1.500"/></svg>
      <svg viewBox="0 0 24 24"><circle cx="12" cy="11.500" r="10" fill="url(#rLight)" stroke="#444"/><path d="M12 1.500a10 10 0 0 0 0 20z" fill="url(#rOrange)"/></svg>
      <i class="t-sep s2"></i>
      <svg viewBox="0 0 24 24"><path d="M12 3l7 3 2.500 7-4 6.500-6.500 1.500-7-3.500-1.500-7L6 5z" fill="url(#rSky)" stroke="#1a2f7c" stroke-width="1.500"/></svg>
      <i class="drop"></i>
    </div>
  </div>

  <div class="canvas">
    <svg class="under" width="955" height="848" viewBox="9 200 955 848">
      <path d="M116.500 200v848M244.500 200v848M371.500 200v848M499.500 200v848M626.500 200v848M754.500 200v848M881.500 200v848M9 206.500h955M9 248.500h955M9 291.500h955M9 333.500h955M9 376.500h955M9 418.500h955M9 461.500h955M9 503.500h955M9 546.500h955M9 588.500h955M9 631.500h955M9 673.500h955M9 716.500h955M9 758.500h955M9 801.500h955M9 843.500h955M9 886.500h955M9 928.500h955M9 971.500h955M9 1013.500h955" fill="none" stroke="#b7b3ab" shape-rendering="crispEdges"/>
      <path d="M710.500 489.500H964V739.500H710.500z" fill="#69a8e0" fill-opacity=".68" stroke="#7c9ab6"/>
      <g fill="none" stroke="#55534e" stroke-width="2.200">
        <path d="M60 210C116 210 115 274.500 171 274.500"/><path d="M41 241C106 241 106 291.500 171 291.500"/><path d="M41 241C104 241 104 198.500 168 198.500"/>
        <path d="M287 266C314 266 318 243 321 215L326 190"/>
        <path d="M9 547.500C70 548 80 551.500 145 551.500M9 569h136"/>
        <path d="M260 543C325 543 325 439.500 389 439.500"/><path d="M260 543C360 543 360 589 459 589"/>
        <path d="M437 612.500h22"/><path d="M481 828.500C635 828.500 242 612.500 403 612.500"/>
        <path d="M214 822.500C300 822.500 300 828.500 386 828.500"/><path d="M289 887C338 887 338 860 386 860"/>
        <path d="M920 646C1002 646 696 532 775 532" stroke="#3f5467"/>
      </g>
      <g fill="none" stroke="#55534e" stroke-width="4.200"><path d="M588 595C654 595 654 512.500 719 512.500M753 512.500h22M904 512.500C932 512.500 932 506.500 960 506.500"/></g>
      <path d="M588 595C654 595 654 512.500 719 512.500" fill="none" stroke="#aaa69f" stroke-width="1.300"/>
      <path d="M753 512.500h22M904 512.500C932 512.500 932 506.500 960 506.500" fill="none" stroke="#7fa0be" stroke-width="1.300"/>
    </svg>

    <div class="pill wide n-inner">nner radius</div>
    <div class="pill wide n-height">eight</div>
    <div class="node stub n-stub"><b></b></div>
    <div class="node n-rect-a"><ul class="in"><li>Plane</li><li>X Size</li><li>Y Size</li><li>Radius</li></ul><b>Rectangle</b><ul class="out"><li>Rectangle</li><li>Length</li></ul></div>
    <div class="node n-rect-b"><ul class="in"><li>Plane</li><li>X Size</li><li>Y Size</li><li>Radius</li></ul><b>Rectangle</b><ul class="out"><li>Rectangle</li><li>Length</li></ul></div>
    <div class="node n-rect-c"><ul class="in"><li>Plane</li><li>X Size</li><li>Y Size</li><li>Radius</li></ul><b>Rectangle</b><ul class="out"><li>Rectangle</li><li>Length</li></ul></div>
    <div class="node n-linear"><ul class="in"><li>Geometry</li><li>Direction</li><li>Count</li></ul><b>Linear Array</b><ul class="out"><li>Geometry</li><li>Transform</li></ul></div>
    <div class="node n-curve"><ul class="in"><li>Geometry</li><li>Curve</li><li>Count</li></ul><b>Curve Array</b><ul class="out"><li>Geometry</li><li>Transform</li></ul></div>
    <div class="node warn n-dash"><ul class="in"><li>Curve</li><li>Pattern</li></ul><b>Dash Pattern</b><ul class="out"><li>Dashes</li><li>Gaps</li></ul><i class="balloon"></i></div>
    <div class="node n-move"><ul class="in"><li>Geometry</li><li>Motion</li></ul><b>Move</b><ul class="out"><li>Geometry</li><li>Transform</li></ul></div>
    <div class="node n-circle"><ul class="in"><li>Plane</li><li>Radius</li></ul><b>Circle</b><ul class="out"><li>Circle</li></ul></div>
    <div class="node warn n-line"><ul class="in"><li>Start Point</li><li>End Point</li></ul><b>Line</b><ul class="out"><li>Line</li></ul><i class="balloon"></i></div>
    <div class="node n-flip"><ul class="in"><li>Curve</li><li>Guide</li></ul><b>Flip Curve</b><ul class="out"><li>Curve</li><li>Flag</li></ul></div>
    <div class="param n-geo1">Geometry</div>
    <div class="param n-geo2">Geometry</div>
    <div class="relay n-relay1"></div>
    <div class="relay n-relay2"></div>
    <div class="param n-edge"></div>
    <div class="corner"></div>

    <svg class="slider" width="176" height="174" viewBox="747 559 176 174">
      <defs>
        <linearGradient id="sO" x1="0" y1="0" x2="0" y2="1"><stop offset="0" stop-color="#f0f0f4"/><stop offset=".15" stop-color="#c9c8d2"/><stop offset="1" stop-color="#8b8897"/></linearGradient>
        <linearGradient id="sI" x1="0" y1="0" x2="0" y2="1"><stop offset="0" stop-color="#b4b4b8"/><stop offset=".1" stop-color="#dcdce2"/><stop offset=".13" stop-color="#cfcfd8"/><stop offset="1" stop-color="#bfbfc8"/></linearGradient>
        <linearGradient id="sW" x1="0" y1="1" x2=".6" y2="0"><stop offset="0" stop-color="#c6c6cc"/><stop offset=".6" stop-color="#f6f6f8"/><stop offset="1" stop-color="#fff"/></linearGradient>
      </defs>
      <circle cx="919.500" cy="646" r="3" fill="#fff" stroke="#000" stroke-width="1.800"/>
      <rect x="748.500" y="560.500" width="170" height="171" rx="4" fill="url(#sO)" stroke="#444" stroke-width="1.500"/>
      <rect x="753.500" y="566.500" width="160" height="159" fill="url(#sI)" stroke="#111" stroke-width="1.500"/>
      <path d="M778 576v140M792 576v140M806 576v140M820 576v140M834 576v140M847.500 576v140M861.500 576v140M875.500 576v140M889.500 576v140M764 590h139M764 604h139M764 618h139M764 632h139M764 646h139M764 660h139M764 674h139M764 688h139M764 702h139" stroke="#000" stroke-opacity=".16"/>
      <rect x="764" y="637.500" width="83.500" height="78.500" fill="url(#sW)" fill-opacity=".86"/>
      <rect x="764" y="576.500" width="139.500" height="139" fill="none" stroke="#111" stroke-width="1.200" stroke-dasharray="2 1.500"/>
      <path d="M764 715.500v-78h83.500v78z" fill="none" stroke="#111"/>
      <path d="M755.500 633.500l7.500 4-7.500 4zM843.500 724l4-7.500 4 7.500z"/>
      <path d="M802.500 619.500h91.500v13h-44l-2.500 4-2.500-4h-42.500z" fill="#eeeef0" stroke="#333" stroke-width="1.400"/>
      <circle cx="847.500" cy="638" r="3.200" fill="#fff" stroke="#111" stroke-width="1.600"/>
      <text class="mono" x="805.500" y="628.500" textLength="84">207.32 ; 121.95</text>
    </svg>

    <svg class="compass" width="52" height="48" viewBox="908 992 52 48">
      <path d="M913.500 1016A21 21 0 0 1 932 998M934 997.500h5M913.500 1021A21 21 0 0 0 924 1037" fill="none" stroke="#000" stroke-width="3"/>
      <path d="M909.500 998l8 1.500-.5 4-4 2z"/>
      <defs><radialGradient id="rKnob"><stop offset="0" stop-color="#f0f0f0"/><stop offset="1" stop-color="#acacac"/></radialGradient></defs>
      <circle cx="934.700" cy="1019" r="19.500" fill="url(#rKnob)" stroke="#222" stroke-width="1.200"/>
      <circle cx="934.700" cy="1019" r="18.500" fill="none" stroke="#fff" stroke-width="1.500"/>
      <path d="M919 1010l5-6 0 5zM950 1010l-7-1 3-6zM919 1031l7-1-2 6zM950 1031l-6-4 0 5z" fill="#fff"/>
    </svg>
  </div>
  <footer class="g-status">
    <svg width="16" height="16" viewBox="0 0 16 16"><circle cx="8" cy="8" r="7.300" fill="#1d86d8" stroke="#0a2c78" stroke-width="1.400"/><path d="M6 3.500q2-2 4 0L9.200 9H6.800z" fill="#0a2c78" stroke="#fff" stroke-width=".9"/><circle cx="8" cy="12" r="1.500" fill="#0a2c78" stroke="#fff" stroke-width=".8"/></svg>
    <span>Autosave complete (37 seconds ago)</span><em>1.0.0007</em>
    <svg class="grip" width="11" height="11" viewBox="0 0 11 11"><path d="M8 0h2v2H8zM8 4h2v2H8zM8 8h2v2H8zM4 4h2v2H4zM4 8h2v2H4zM0 8h2v2H0z" fill="#aaa"/></svg>
  </footer>
</section>
</body>
</html>
```
FILE: styles.css
```css
* { box-sizing: border-box; }
body {
  margin: 0; width: 1920px; height: 1080px; overflow: hidden; position: relative;
  background: linear-gradient(90deg, #00707f, #007886 12%, #2f6b70 80%, #679598);
  font-family: "Open Sans", "Noto Sans", sans-serif; font-size: 12px; letter-spacing: -.35px; color: #111;
}
ul, p, h4 { margin: 0; padding: 0; list-style: none; }
.defs { position: absolute; }
svg { display: block; flex: none; }
.taskbar { position: absolute; left: 0; right: 0; bottom: 0; height: 2px; background: #0b0f12; }
.taskbar i { display: block; margin-left: 296px; width: 48px; height: 2px; background: #3c4043; }

/* ---------- Rhinoceros window ---------- */
.rhino {
  position: absolute; left: 961px; top: 0; width: 959px; height: 1078px; background: #ebecf0;
  border: 1px solid #de4a7c; border-bottom: 0; display: flex; flex-direction: column; padding-left: 5px;
}
.r-title { height: 30px; background: #fff; display: flex; align-items: center; padding: 0 0 1px 2px; flex: none; }
.r-name { margin-left: 6px; color: #000; white-space: nowrap; letter-spacing: -.27px; }
.r-ctl { margin-left: auto; margin-right: 17px; }
.r-menu {
  height: 18px; background: #fff; display: grid; align-items: center; padding: 1px 0 0 1px; flex: none; line-height: 17px; letter-spacing: -.38px;
  grid-template-columns: 32px 34px 40px 44px 53px 40px 43px 72px 67px 42px 55px 51px 48px 40px;
}
.r-history { height: 40px; border-top: 5px solid #ebecf0; background: #fff; display: flex; flex: none; border-bottom: 1px solid #c0c9dc; }
.r-lines { height: 34px; overflow: hidden; flex: 1; padding-left: 2px; display: flex; flex-direction: column; justify-content: flex-end; }
.r-lines p { line-height: 17px; height: 15px; flex: none; }
.r-scroll { background: #f0f0f0; }
.r-command { height: 19px; background: #fff; display: flex; align-items: center; padding: 0 2px; flex: none; }
.r-command b { width: 63px; white-space: nowrap; letter-spacing: -.6px; line-height: 14px; padding-bottom: 1px; }
.caret { width: 2px; height: 14px; background: #000; }
.r-spin { margin-left: auto; }
.r-tabs {
  height: 24px; margin-top: 1px; border-top: 3px solid #ebecf0; display: grid; align-items: end; flex: none; position: relative; padding-left: 1px;
  grid-template-columns: 69px 63px 64px 59px 53px 106px 66px 75px 83px 91px 77px 81px 1fr; border-bottom: 1px solid #c3cee2; overflow: hidden; letter-spacing: -.37px;
}
.r-tabs span {
  height: 17px; line-height: 19px; padding-left: 9px; margin-right: -6px; white-space: nowrap; position: relative; z-index: 0;
  background: #bfcade; clip-path: polygon(0 100%, 8px 0, calc(100% - 2px) 0, 100% 2px, 100% 100%);
}
.r-tabs span:first-child { margin-right: 0; }
.r-tabs span::before { content: ""; position: absolute; inset: 1px 1px 0 1px; z-index: -1; background: #d8d8d8; clip-path: polygon(0 100%, 8px 0, 100% 0, 100% 100%); }
.r-tabs span.on::before, .vp-tabs span.on::before { background: #ebecf0; }
.r-tabs .cut { margin-right: 29px; }
.r-more { position: absolute; z-index: 1; right: 0; bottom: 0; width: 31px; height: 17px; background: #d8d8d8; border-left: 1px solid #c3cee2; display: flex; align-items: center; gap: 4px; padding-left: 2px; }
.r-more b { font-size: 15px; line-height: 14px; padding-bottom: 3px; width: 9px; }
.r-icons { height: 45px; padding: 3px 0 0 3px; display: flex; gap: 4px; flex: none; }
.r-icons svg { width: 24px; height: 24px; }
.r-sep { width: 2px; margin: 0 -1px 0 1px; height: 26px; background: #c4c6cc; }
.r-body { flex: none; height: 854px; display: grid; grid-template-columns: 58px 893px; grid-template-rows: 834px 20px; align-content: start; }
.r-palette {
  margin-top: 3px; display: grid; grid-template-columns: 28px 28px; grid-auto-rows: 28px; align-content: start; grid-row: span 2;
  border-top: 1px solid #c3d0e4; padding-top: 4px; margin-left: -5px; overflow: hidden; margin-right: 6px;
}
.icon-t { font: bold 25px "Liberation Serif", serif; fill: #5b80ec; stroke: #1c2b5c; stroke-width: .8px; }
.viewport { position: relative; background: #9ca3aa; border: 1px solid #bcc8dc; overflow: hidden; }
.vp-label { position: absolute; left: 0; top: 0; width: 47px; height: 19px; background: #86a1c0; display: flex; align-items: center; padding: 0 0 1px 7px; }
.vp-label b { width: 29px; border-right: 1px solid #111; height: 15px; line-height: 14px; margin-right: 1px; letter-spacing: 0; }
.vp-label i, .drop { border: 4px solid transparent; border-top-color: #000; border-bottom: 0; width: 0; height: 0; }
.axis { font: 13px "Open Sans", sans-serif; fill: #606368; }
.vp-tabs { display: grid; grid-template-columns: 71px 39px 43px 43px 27px; padding-top: 2px; }
.vp-tabs span {
  height: 18px; line-height: 17px; padding-left: 10px; margin-right: -6px; position: relative; z-index: 0; background: #bfcade; white-space: nowrap;
  clip-path: polygon(0 0, 100% 0, 100% 100%, 8px 100%, 0 10px);
}
.vp-tabs span::before { content: ""; position: absolute; inset: 0 1px 1px 1px; z-index: -1; background: #d8d8d8; clip-path: polygon(0 0, 100% 0, 100% 100%, 7px 100%, 0 10px); }
.vp-tabs span.plus { margin-right: 0; padding-top: 4px; }
.vp-tabs .on { padding-left: 14px; }
.vp-tabs .plus { padding-left: 10px; }
.osnap {
  height: 27px; display: grid; align-items: center; flex: none; padding: 6px 0 0 3px;
  grid-template-columns: 43px 48px 51px 44px 44px 37px 47px 43px 52px 48px 56px 68px 60px;
}
.osnap label { display: flex; align-items: center; gap: 3px; line-height: 16px; margin-left: -1px; }
.osnap label::before { content: ""; width: 13px; height: 13px; border: 1px solid #333; background: #fff; line-height: 12px; font-size: 11px; color: #333; }
.osnap label.chk::before { content: "✓"; letter-spacing: 0; text-align: center; }
.osnap label.off::before { width: 11px; height: 11px; border-color: #b0b0b0; background: #e0e0e0; margin-right: 1px; }
.r-status {
  flex: none; height: 20px; border-top: 1px solid #c0cadc; display: grid; line-height: 19px; margin-left: -5px;
  grid-template-columns: 44px 79px 79px 79px 79px 150px 58px 40px 42px 43px 66px 53px 82px 36px 8px;
}
.r-status > * { border-right: 1px solid #c0cadc; text-align: center; white-space: nowrap; overflow: hidden; }
.r-status > b { background: #e4f1fc; letter-spacing: -.4px; }
.r-status .first { text-align: right; padding-right: 3px; }
.r-status .layer { display: flex; align-items: center; gap: 3px; padding-left: 3px; }
.layer i { width: 14px; height: 14px; background: #000; }

/* ---------- Grasshopper window ---------- */
.gh {
  position: absolute; left: 7px; top: 0; width: 960px; height: 1073px; background: #f0f0f0; border: 1px solid #3a3a3a;
  box-shadow: 2px 0 12px rgba(0, 0, 0, .35); display: flex; flex-direction: column; overflow: visible;
}
.g-title { height: 30px; background: #fff; color: #999; display: flex; align-items: center; justify-content: space-between; padding: 0 17px 1px 8px; flex: none; letter-spacing: -.48px; }
.g-menu {
  height: 27px; background: linear-gradient(90deg, #f0f0f0, #fcfcfc 70%); color: #000; display: grid; align-items: center; padding-left: 13px; flex: none;
  grid-template-columns: 37px 39px 44px 57px 63px 60px 1fr;
}
.g-menu .doc { text-align: right; padding-right: 10px; }
.g-tabs { height: 23px; display: grid; grid-template-columns: 63px 47px 39px 48px 46px 56px 43px 61px 67px 54px 60px; align-items: center; color: #707070; line-height: 23px; flex: none; letter-spacing: -.42px; }
.g-tabs .on { color: #111; background: #fdfdfd; border: 1px solid #999; border-bottom: 0; border-radius: 6px 6px 0 0; width: 55px; padding-left: 6px; height: 23px; line-height: 19px; }
.ribbon { height: 86px; border-top: 1px solid #a5a5a5; border-right: 1px solid #ccc; border-radius: 0 8px 0 0; background: linear-gradient(#dcdcdc, #f0f0f0 80%); padding: 2px 0 0 3px; display: flex; gap: 3px; flex: none; }
.panel { height: 73px; border: 1px solid #888; border-radius: 5px; overflow: hidden; background: linear-gradient(#dadada, #efefef); display: flex; flex-direction: column; }
.p-geo { width: 259px; } .p-pri { width: 183px; } .p-inp { width: 287px; } .p-utl { width: 203px; }
.groups { display: flex; justify-content: center; gap: 10px; height: 58px; margin-left: -2px; }
.group { display: grid; grid-template-rows: 28px 28px; position: relative; place-items: center; }
.c1 { grid-template-columns: 28px; } .c2 { grid-template-columns: 28px 28px; } .c3 { grid-template-columns: repeat(3, 28px); } .c4 { grid-template-columns: repeat(4, 28px); }
.group + .group::before { content: ""; position: absolute; left: -6px; top: 3px; bottom: 2px; width: 2px; background: linear-gradient(90deg, #aaa, #fff); }
.group svg { width: 24px; height: 24px; }
.panel h4 { font-weight: 400; font-size: 11.500px; color: #fff; background: #1e1e1e; text-align: center; line-height: 12px; height: 14px; letter-spacing: -.3px; position: relative; padding-right: 12px; }
.panel h4 i { position: absolute; right: 3px; font-style: normal; font-weight: 700; color: #aaa; }
.tiny { font: 700 8px "Liberation Sans", sans-serif; fill: #fff; }
.dark { fill: #111; text-anchor: middle; }
.serif { font-family: "Liberation Serif", serif; font-weight: 700; fill: #fff; text-anchor: middle; }
.mid { font-size: 14px; } .big { font-size: 18px; }
.digit { font: italic 700 14px "Liberation Sans", sans-serif; text-anchor: middle; fill: #222; }
.dim { fill: #666; }
.aug { font: 700 7px "Liberation Sans", sans-serif; text-anchor: middle; fill: #ddd; letter-spacing: .3px; }
.d20 { font: 700 14px "Liberation Sans", sans-serif; text-anchor: middle; fill: #fff; letter-spacing: 0; }
.tdm { font: 700 9px "Liberation Sans", sans-serif; text-anchor: middle; letter-spacing: -.3px; }
.abc { font: 700 11px "Liberation Sans", sans-serif; fill: #222; letter-spacing: -.5px; }
.rec { font: 9px "Liberation Sans", sans-serif; text-anchor: middle; fill: #888; letter-spacing: -.3px; }
.g-toolbar { height: 33px; border-top: 2px solid #888; background: linear-gradient(#fff, #ececec); display: flex; align-items: center; flex: none; padding: 0 0 1px 3px; }
.g-toolbar > svg { width: 24px; height: 24px; }
.g-toolbar .t-save { margin-left: 6px; }
.g-toolbar .t-pen { margin-left: -3px; }
.t-sep { width: 1px; height: 20px; background: #bbb; margin: 0 4px 0 8px; }
.combo { width: 136px; height: 23px; border: 1px solid #7a7a7a; background: #fff; display: flex; align-items: center; justify-content: space-between; padding: 0 4px 1px 2px; margin-right: 5px; color: #000; }
.drop { margin: 0 6px; border-width: 3px; border-bottom: 0; }
.t-right { margin-left: auto; display: flex; align-items: center; gap: 3px; }
.t-right svg { width: 24px; height: 24px; }
.t-sel { border: 1px solid #0a78d7; width: 28px; height: 28px; display: grid; place-items: center; }
.t-right .s1 { margin: 0 6px 0 5px; }
.t-right .s2 { margin: 0 1px 0 3px; }
.t-right .drop { margin: 0 6px 0 0; }

/* ---------- definition canvas ---------- */
.canvas { position: relative; margin-left: 1px; width: 955px; height: 848px; background: #d4d0c8; overflow: hidden; flex: none; outline: 1px solid #f8f8f8; font-size: 9.100px; letter-spacing: -.08px; }
.canvas > * { position: absolute; }
.under { left: 0; top: 0; }
.node {
  display: flex; border: 1px solid #2e2e2e; border-bottom: 2px solid #6e6e6e; border-radius: 3px;
  background: linear-gradient(#fbfbfb, #e6e6e6 12%, #c9c9c9); box-shadow: 0 0 0 .500px rgba(0, 0, 0, .3);
}
.node ul { display: flex; flex-direction: column; padding: 2px 0; }
.node li { flex: 1; display: flex; align-items: center; position: relative; white-space: nowrap; line-height: 10px; color: #222; }
.node .in { width: var(--in); }
.node .in li { justify-content: flex-end; padding-right: 4px; }
.node .out { flex: 1; }
.node .out li { padding-left: 4px; }
.node li::after, .param::before, .param::after, .pill::after {
  content: ""; position: absolute; top: calc(50% - 4px); width: 4px; height: 8px; background: #fff; border: 1px solid #000; box-shadow: 0 0 0 .500px #000;
}
.node .in li::after, .param::before { left: -4px; border-right: 0; border-radius: 4px 0 0 4px; clip-path: inset(-1px 0 -1px -1px); }
.node .out li::after, .param::after, .pill::after { right: -4px; border-left: 0; border-radius: 0 4px 4px 0; clip-path: inset(-1px -1px -1px 0); }
.node > b {
  width: 22px; margin: 1px 0; border: 1px solid #000; border-radius: 3px; color: #fff; font-size: 11.500px; letter-spacing: -.1px; white-space: nowrap;
  background: linear-gradient(0deg, #999, #4c4c4c 7%, #333); writing-mode: vertical-rl; transform: rotate(180deg); text-align: center; line-height: 20px;
}
.warn { background: linear-gradient(#ffd9a0, #ffa630 9%, #ff8c14); border-color: #6b2c10; border-bottom-color: #a04a20; }
.balloon { position: absolute; right: -1px; top: -17px; width: 18px; height: 15px; border: 1px solid #b07c10; border-radius: 2px; background: linear-gradient(#fff2b8, #f9cf4a 50%, #f0a400); }
.balloon::after { content: ""; position: absolute; left: 5px; top: 13px; border: 3px solid transparent; border-top: 4px solid #e8a010; border-bottom: 0; }
.n-rect-a { left: 161px; top: -45px; width: 112px; height: 72px; --in: 38px; }
.n-rect-b { left: 164px; top: 47px; width: 112px; height: 72px; --in: 36px; }
.n-rect-c { left: 137px; top: 324px; width: 113px; height: 72px; --in: 37px; }
.n-linear { left: 381px; top: 225px; width: 127px; height: 80px; --in: 50px; }
.n-curve { left: 451px; top: 375px; width: 127px; height: 78px; --in: 50px; }
.n-dash { left: 575px; top: 155px; width: 104px; height: 83px; --in: 39px; }
.n-move { left: 767px; top: 301px; width: 127px; height: 44px; --in: 50px; }
.n-circle { left: 17px; top: 513px; width: 95px; height: 44px; --in: 37px; }
.n-line { left: 180px; top: 551px; width: 105px; height: 39px; --in: 53px; }
.n-flip { left: 378px; top: 611px; width: 93px; height: 68px; --in: 34px; }
.n-stub { left: 348px; top: -30px; width: 82px; height: 33px; }
.n-stub b { margin-left: 23px; width: 20px; }
.param { border: 1px solid #333; border-bottom: 2px solid #666; border-radius: 4px; background: linear-gradient(#fbfbfb, #c8c8c8); height: 19px; width: 53px; text-align: center; line-height: 17px; color: #222; }
.n-geo1 { left: 152px; top: 613px; }
.n-geo2 { left: 226px; top: 678px; }
.n-edge { left: 951px; top: 297px; height: 19px; }
.relay { width: 34px; height: 16px; border: 2px solid #222; border-radius: 6px; background: linear-gradient(90deg, #222 3px, #9a98a8 3px, #aeadba 50%, #9a98a8 calc(100% - 3px), #222 calc(100% - 3px)); }
.n-relay1 { left: 394px; top: 405px; }
.n-relay2 { left: 710px; top: 305px; }
.pill { border: 1px solid #333; border-bottom: 2px solid #555; border-radius: 3px; background: linear-gradient(#d8d8e0, #8f8d9e); height: 18px; line-height: 15px; text-align: right; padding-right: 6px; white-space: nowrap; color: #222; }
.n-inner { left: -10px; width: 60px; top: 1px; }
.n-height { left: -10px; width: 40px; top: 32px; }
.corner { left: -2px; top: 820px; width: 9px; height: 28px; border: 1px solid #111; background: linear-gradient(#ccc, #777); }
.slider { left: 738px; top: 359px; }
.mono { font: 10px "Liberation Mono", monospace; fill: #111; }
.compass { left: 899px; top: 792px; }
.g-status { flex: 1; margin-top: 1px; border-top: 1px solid #d0d0d0; display: flex; align-items: center; padding: 0 3px 0 4px; gap: 7px; position: relative; }
.g-status span { color: #111; margin-left: -3px; letter-spacing: -.29px; }
.g-status em { font-style: normal; color: #777; margin-left: auto; margin-right: 9px; }
.g-status .grip { align-self: flex-end; }
```
